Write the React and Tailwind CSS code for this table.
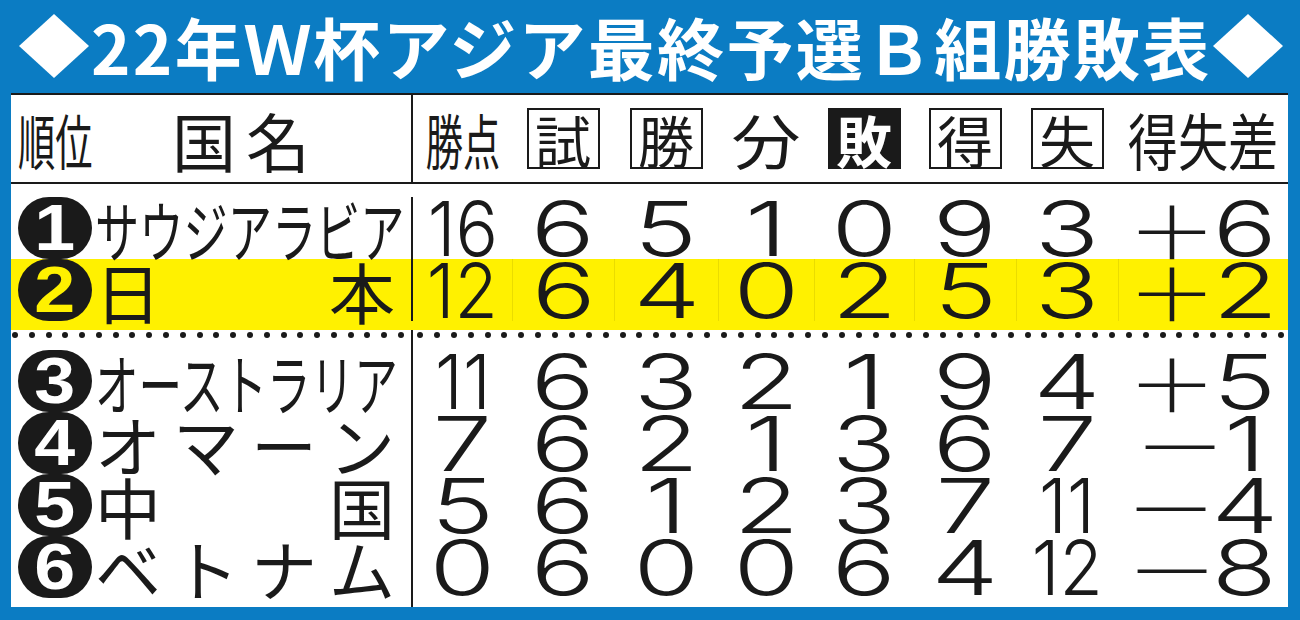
import React from "react";

const cjk = "font-['Noto_Sans_CJK_JP','Noto_Sans_CJK_SC',sans-serif]";
const num = "font-['Inter','Liberation_Sans',Arial,sans-serif]";
const bold = "font-['Liberation_Sans',Arial,sans-serif]";

const cols =
  "grid grid-rows-1 grid-cols-[402px_99px_102px_104px_96px_100px_102px_102px_170px]";

const rows = [
  {
    rank: "1",
    name: ["サウジアラビア"],
    squeeze: "scale-x-[0.67]",
    vals: ["16", "6", "5", "1", "0", "9", "3"],
    sign: "＋",
    diff: "6",
  },
  {
    rank: "2",
    name: ["日", "本"],
    vals: ["12", "6", "4", "0", "2", "5", "3"],
    sign: "＋",
    diff: "2",
    hot: true,
  },
  {
    rank: "3",
    name: ["オーストラリア"],
    squeeze: "scale-x-[0.66]",
    vals: ["11", "6", "3", "2", "1", "9", "4"],
    sign: "＋",
    diff: "5",
  },
  {
    rank: "4",
    name: ["オ", "マ", "ー", "ン"],
    vals: ["7", "6", "2", "1", "3", "6", "7"],
    sign: "－",
    diff: "1",
  },
  {
    rank: "5",
    name: ["中", "国"],
    vals: ["5", "6", "1", "2", "3", "7", "11"],
    sign: "－",
    diff: "4",
  },
  {
    rank: "6",
    name: ["ベ", "ト", "ナ", "ム"],
    vals: ["0", "6", "0", "0", "6", "4", "12"],
    sign: "－",
    diff: "8",
  },
];

const Diamond = () => (
  <svg width="70" height="64" viewBox="0 0 70 64" className="shrink-0">
    <polygon points="35,0 70,32 35,64 0,32" fill="#ffffff" />
  </svg>
);

const Num = ({ v }) => (
  <span
    className={`inline-block text-[76px] font-light leading-[60px] ${num} ${
      v.length > 1 ? "scale-x-[0.93]" : "scale-x-[1.4]"
    }`}
  >
    {v}
  </span>
);

const Disc = ({ n, hot }) => (
  <div className="flex h-[62px] w-[74px] shrink-0 items-center justify-center rounded-full bg-[#1a1a1a]">
    <span
      className={`inline-block scale-x-[1.15] text-[64px] font-bold leading-[50px] ${bold} ${
        hot ? "text-[#fff100]" : "text-white"
      }`}
    >
      {n}
    </span>
  </div>
);

const Sign = ({ s }) => (
  <span className="flex w-[67px] justify-center">
    <span
      className={`inline-block text-[72px] font-light leading-[60px] ${cjk} ${
        s === "＋" ? "scale-x-[1.25]" : "scale-x-[1.3]"
      }`}
    >
      {s}
    </span>
  </span>
);

const Row = ({ r }) => (
  <div className={`${cols} h-[62px] ${r.hot ? "bg-[#fff100]" : ""}`}>
    <div className="flex items-center border-r-2 border-[#1a1a1a] pl-[7px]">
      <Disc n={r.rank} hot={r.hot} />
      <div
        className={`ml-[3px] flex w-[300px] items-center text-[66px] leading-[60px] ${cjk} ${
          r.squeeze ? "justify-start" : "justify-between"
        }`}
      >
        {r.squeeze ? (
          <span
            className={`inline-block origin-left whitespace-nowrap text-[66px] ${r.squeeze}`}
          >
            {r.name[0]}
          </span>
        ) : (
          r.name.map((c, i) => <span key={i}>{c}</span>)
        )}
      </div>
    </div>
    {r.vals.map((v, i) => (
      <div
        key={i}
        className={`flex items-center justify-center ${
          r.hot && i > 0 ? "border-l border-[#eadc00]" : ""
        }`}
      >
        <Num v={v} />
      </div>
    ))}
    <div
      className={`flex items-center justify-center gap-[16px] ${
        r.hot ? "border-l border-[#eadc00]" : ""
      }`}
    >
      <Sign s={r.sign} />
      <Num v={r.diff} />
    </div>
  </div>
);

const Dots = ({ n, cls }) => (
  <div className={`flex justify-between ${cls}`}>
    {Array.from({ length: n }).map((_, i) => (
      <span key={i} className="h-[6px] w-[6px] rounded-full bg-[#1a1a1a]" />
    ))}
  </div>
);

const Boxed = ({ c, dark }) => (
  <span
    className={`flex h-[61px] w-[73px] items-center justify-center border-2 border-[#1a1a1a] text-[56px] leading-none ${
      dark ? "bg-[#1a1a1a] font-bold text-white" : ""
    }`}
  >
    {c}
  </span>
);

export default function App() {
  return (
    <div className="h-[620px] w-[1300px] overflow-hidden bg-[#0b7cc3]">
      <div
        className={`flex h-[93px] items-center pb-[2px] pl-[19px] text-white ${cjk}`}
      >
        <Diamond />
        <span className="ml-[2px] mr-[2px] whitespace-nowrap text-[67px] font-bold leading-[70px] tracking-[2.3px]">
          22年Ｗ杯アジア最終予選Ｂ組勝敗表
        </span>
        <Diamond />
      </div>

      <div className="ml-[11px] w-[1277px] border-t-2 border-[#1a1a1a] bg-white text-[#1a1a1a]">
        <div
          className={`${cols} h-[89px] border-b-2 border-[#1a1a1a] ${cjk} leading-none`}
        >
          <div className="flex items-center border-r-2 border-[#1a1a1a] pl-[7px]">
            <span className="w-[74px] shrink-0 whitespace-nowrap">
              <span className="inline-block origin-left scale-x-[0.62] text-[60px]">
                順位
              </span>
            </span>
            <span className="ml-[80px] flex gap-[10px] text-[64px]">
              <span>国</span>
              <span>名</span>
            </span>
          </div>
          <div className="flex items-center justify-center">
            <span className="inline-block scale-x-[0.62] whitespace-nowrap text-[60px]">
              勝点
            </span>
          </div>
          <div className="flex items-center justify-center">
            <Boxed c="試" />
          </div>
          <div className="flex items-center justify-center">
            <Boxed c="勝" />
          </div>
          <div className="flex items-center justify-center">
            <span className="inline-block scale-x-[1.15] text-[60px]">分</span>
          </div>
          <div className="flex items-center justify-center">
            <Boxed c="敗" dark />
          </div>
          <div className="flex items-center justify-center">
            <Boxed c="得" />
          </div>
          <div className="flex items-center justify-center">
            <Boxed c="失" />
          </div>
          <div className="flex items-center justify-center">
            <span className="inline-block scale-x-[0.81] whitespace-nowrap text-[62px]">
              得失差
            </span>
          </div>
        </div>

        <div className="pt-[13px]">
          <Row r={rows[0]} />
        </div>
        <div className="bg-[#fff100] pb-[9px]">
          <Row r={rows[1]} />
        </div>
        <div className="grid h-[20px] grid-cols-[402px_875px]">
          <div className="border-r-2 border-[#1a1a1a] pt-[2px]">
            <Dots n={24} cls="pl-[1px] pr-[7px]" />
          </div>
          <div className="pt-[2px]">
            <Dots n={52} cls="px-[4px]" />
          </div>
        </div>
        {rows.slice(2).map((r, i) => (
          <Row key={i} r={r} />
        ))}
        <div className="grid h-[9px] grid-cols-[402px_875px]">
          <div className="border-r-2 border-[#1a1a1a]" />
          <div />
        </div>
      </div>
    </div>
  );
}
